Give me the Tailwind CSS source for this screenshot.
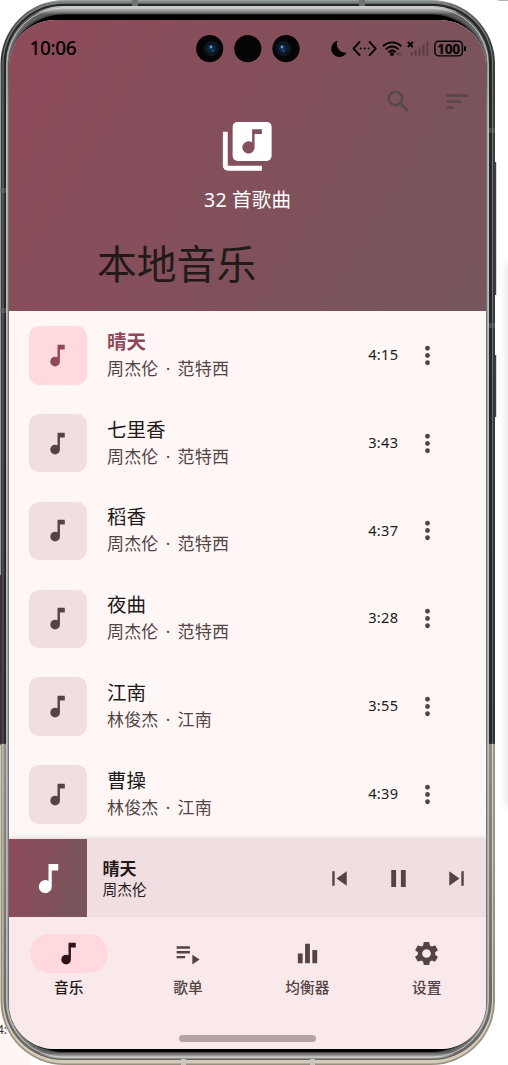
<!DOCTYPE html>
<html lang="zh-CN">
<head>
<meta charset="UTF-8">
<title>本地音乐</title>
<script src="https://cdn.jsdelivr.net/npm/@tailwindcss/browser@4"></script>
</head>
<body class="bg-white">
<svg width="0" height="0" class="absolute">
  <symbol id="note" viewBox="0 0 24 24"><path d="M12 3v10.55A4 4 0 1 0 14 17V7h4V3z"/></symbol>
  <symbol id="more" viewBox="0 0 24 24"><circle cx="12" cy="6" r="2"/><circle cx="12" cy="12" r="2"/><circle cx="12" cy="18" r="2"/></symbol>
</svg>
<div class="relative w-[508px] h-[1065px] overflow-hidden font-['Noto_Sans','Noto_Sans_CJK_SC',sans-serif] text-[#22191a]">
  <!-- Phone body -->
  <svg class="absolute inset-0" width="508" height="1065">
    <defs>
      <linearGradient id="edge" x1="0" y1="0" x2="0" y2="1065" gradientUnits="userSpaceOnUse">
        <stop offset="0" stop-color="#a0a6a0"/><stop offset=".004" stop-color="#6c706d"/><stop offset=".04" stop-color="#3a3c3c"/><stop offset=".698" stop-color="#303235"/><stop offset=".699" stop-color="#9d978a"/><stop offset="1" stop-color="#989080"/>
      </linearGradient>
      <linearGradient id="mid" x1="0" y1="0" x2="0" y2="1065" gradientUnits="userSpaceOnUse">
        <stop offset="0" stop-color="#7c807d"/><stop offset=".698" stop-color="#606366"/><stop offset=".699" stop-color="#d8d2c5"/><stop offset="1" stop-color="#d2cbbb"/>
      </linearGradient>
      <linearGradient id="inner" x1="0" y1="0" x2="0" y2="1065" gradientUnits="userSpaceOnUse">
        <stop offset="0" stop-color="#252728"/><stop offset=".698" stop-color="#252728"/><stop offset=".699" stop-color="#8f8b80"/><stop offset="1" stop-color="#66635b"/>
      </linearGradient>
      <linearGradient id="metal" x1="0" y1="6" x2="0" y2="1060" gradientUnits="userSpaceOnUse">
        <stop offset="0" stop-color="#d0d0d0"/><stop offset=".004" stop-color="#a0a0a0"/><stop offset=".008" stop-color="#5c5c5c"/><stop offset=".05" stop-color="#8c8e8e"/><stop offset=".1" stop-color="#b4b6b6"/><stop offset=".94" stop-color="#b4b6b6"/><stop offset=".985" stop-color="#777"/><stop offset=".993" stop-color="#666"/><stop offset="1" stop-color="#ddd"/>
      </linearGradient>
      <filter id="soft"><feGaussianBlur stdDeviation="1.5"/></filter>
      <filter id="soft2" x="-1" width="3"><feGaussianBlur stdDeviation="4"/></filter>
    </defs>
    <rect x="498" y="0" width="10" height="1" fill="#b5b5b5"/>
    <rect x="506" y="262" width="12" height="544" fill="#e6e6e6" filter="url(#soft2)"/>
    <rect x="0" y="575" width="1" height="170" fill="#5a2a35"/>
    <rect x="0" y="745" width="30" height="320" fill="#fff5f5"/>
    <text x="-3" y="1034" font-size="12" fill="#333">4:</text>
    <path d="M494 162h2.200v133h-2.200zM494 355h2.200v62h-2.200z" fill="#3d3f40"/>
    <rect x=".5" y="0" width="494.500" height="1065" rx="64" fill="url(#edge)"/>
    <rect x="2.500" y="1.500" width="490.500" height="1062" rx="62" fill="url(#mid)"/>
    <rect x="3.500" y="3.800" width="488.500" height="1056.200" rx="60" fill="url(#inner)"/>
    <rect x="6" y="6" width="483" height="1052.500" rx="57" fill="url(#metal)"/>
    <rect x="7" y="8" width="481" height="1049" rx="56" fill="none" stroke="#dcdcdc" stroke-width="1" opacity=".75"/>
    <rect x="9" y="15" width="477" height="1036.500" rx="52" fill="#000" filter="url(#soft)"/>
    <rect x="9" y="14.500" width="477" height="1037.500" rx="55" fill="#000"/>
    <path d="M132 0h6v6h-6zM359 0h6v6h-6z" fill="#6f7370"/>
    <path d="M181 1059h5v6h-5zM310 1059h5v6h-5z" fill="#c9c5ba"/>
    <path d="M0 188h6v5H0zM0 308h6v5H0zM489 128h6v5h-6zM489 323h6v5h-6z" fill="#6d6f70" opacity=".5"/>
  </svg>

  <!-- Screen -->
  <div class="absolute left-[9px] top-[20px] w-[477.3px] h-[1029px] rounded-t-[46px] rounded-b-[46px] overflow-hidden bg-[#fff7f6] flex flex-col">
    <header class="h-[291px] shrink-0 flex flex-col bg-linear-[121deg] from-[#8f4a5a] to-[#75565b]">
      <div class="h-[56px] shrink-0 relative pl-[20.500px] flex items-center">
        <span class="text-[19px] leading-none font-medium text-black font-['Noto_Sans'] tracking-[-0.400px] pt-px">10:06</span>
        <svg class="absolute inset-0" width="477" height="56" viewBox="9 20 477 56" fill="none">
          <g fill="#050507"><circle cx="209.700" cy="48.700" r="13.600"/><circle cx="247.800" cy="48.700" r="13.600"/><circle cx="286" cy="48.700" r="13.600"/></g>
          <g><circle cx="211.500" cy="48.500" r="7.800" fill="#10141c"/><circle cx="211.500" cy="48.500" r="4.200" fill="#0d2748"/><circle cx="211" cy="47" r="1.400" fill="#5a9ae0"/><circle cx="213" cy="50.500" r="1" fill="#2c5f9c"/>
          <circle cx="283.500" cy="48.500" r="7.800" fill="#10141c"/><circle cx="283" cy="48.500" r="4.200" fill="#0d2748"/><circle cx="282" cy="47" r="1.400" fill="#5a9ae0"/><circle cx="283.500" cy="50.500" r="1" fill="#2c5f9c"/></g>
          <path d="M337.500 40.800a8.200 8.200 0 1 0 9.200 11.700a8.500 8.500 0 0 1-9.200-11.700z" fill="#000"/>
          <path d="M359.500 42l-6 6.600 6 6.600M369.700 42l6 6.600-6 6.600" stroke="#000" stroke-width="1.900" stroke-linecap="round" stroke-linejoin="round"/>
          <g fill="#000"><circle cx="360.700" cy="48.600" r="1"/><circle cx="364.700" cy="48.600" r="1"/><circle cx="368.700" cy="48.600" r="1"/></g>
          <path d="M383.500 45.700a12.800 12.800 0 0 1 17.300 0M386.300 48.900a8.500 8.500 0 0 1 11.700 0M389 51.700a5 5 0 0 1 6.200 0" stroke="#000" stroke-width="1.900" stroke-linecap="round"/>
          <circle cx="392" cy="54" r="2" fill="#000"/><ellipse cx="398.800" cy="54" rx="2.500" ry="1.500" fill="#5d3f45"/>
          <path d="M407.800 42l5 5M412.800 42l-5 5" stroke="#000" stroke-width="1.800"/>
          <path d="M411.500 52v3.700M415.500 50v5.700M419.500 47.500v8.200M423.500 44.500v11.200M427.300 41.500v14.200" stroke="#5c3d44" stroke-width="2"/>
          <rect x="434.900" y="41.200" width="27.500" height="14.700" rx="3.800" stroke="#000" stroke-width="1.400"/><path d="M464 46.300h1a1 1 0 0 1 1 1v2.600a1 1 0 0 1-1 1h-1z" fill="#000"/>
          <text x="448.500" y="53.500" font-family="Noto Sans" font-weight="700" font-size="13.800" letter-spacing="-.2" text-anchor="middle" fill="#000">100</text>
        </svg>
      </div>
      <div class="h-[46px] shrink-0 flex justify-end items-center gap-[30px] pr-[14.500px] pt-[4px] text-[#57464a]">
        <svg width="29" height="29" viewBox="0 0 24 24" fill="currentColor"><path d="M15.500 14h-.79l-.28-.27A6.470 6.470 0 0 0 16 9.500 6.500 6.500 0 1 0 9.500 16c1.610 0 3.090-.59 4.230-1.570l.27.28v.79l5 4.990L20.490 19zM9.500 14a4.500 4.500 0 1 1 0-9 4.500 4.500 0 0 1 0 9z"/></svg>
        <svg width="29" height="29" viewBox="0 0 24 24" fill="currentColor"><path d="M3 18h6v-2H3zM3 6v2h18V6zm0 7h12v-2H3z"/></svg>
      </div>
      <div class="flex flex-col items-center">
        <svg class="-mt-[4.800px] h-[58.500px] w-[58.500px]" viewBox="0 0 24 24" fill="#fff"><path d="M20 2H8a2 2 0 0 0-2 2v12a2 2 0 0 0 2 2h12a2 2 0 0 0 2-2V4a2 2 0 0 0-2-2zm-2 5h-3v5.500a2.500 2.500 0 1 1-1-2V5h4zM4 6H2v14a2 2 0 0 0 2 2h14v-2H4z"/></svg>
        <div class="h-[27px] mt-[10.300px] text-[19.500px] leading-[27px] text-white tracking-[0.200px]">32 首歌曲</div>
      </div>
      <div class="mt-[19px] pl-[88px] h-[60px] leading-[60px] text-[39.800px] font-['Noto_Sans_CJK_SC']">本地音乐</div>
    </header>

    <main id="songs" class="h-[528.300px] pt-[0.500px] shrink-0 overflow-hidden"></main>

    <section class="relative h-[78px] shrink-0 flex items-center bg-[#f0dee0] shadow-[0_0_5px_rgba(0,0,0,.2)]">
      <div class="w-[78px] h-[78px] flex items-center justify-center bg-linear-[100deg] from-[#8f4a5a] to-[#75565b]"><svg width="39" height="39" fill="#fff"><use href="#note"/></svg></div>
      <div class="pl-[15.500px] flex-1 font-['Noto_Sans_CJK_SC'] -mt-px">
        <div class="text-[17px] leading-[22px] font-bold">晴天</div>
        <div class="text-[14.700px] leading-[20px]">周杰伦</div>
      </div>
      <div class="flex items-center gap-[29.500px] pr-[15px] text-[#524345]">
        <svg width="29" height="29" viewBox="0 0 24 24" fill="currentColor"><path d="M6 6h2v12H6zm3.500 6l8.500 6V6z"/></svg>
        <svg width="29" height="29" viewBox="0 0 24 24" fill="currentColor"><path d="M6 19h4V5H6zM14 5v14h4V5z"/></svg>
        <svg width="29" height="29" viewBox="0 0 24 24" fill="currentColor"><path d="M6 18l8.500-6L6 6zM16 6v12h2V6z"/></svg>
      </div>
    </section>

    <nav class="relative flex-1 bg-[#fae9ea] grid grid-cols-4 pt-[17.200px] text-[#524345] text-[14.700px] leading-[20px] font-medium font-['Noto_Sans_CJK_SC'] text-center">
      <div class="flex flex-col items-center gap-[4px] text-[#22191a]"><div class="w-[78px] h-[39px] rounded-full bg-[#ffd9de] flex items-center justify-center"><svg width="29" height="29" fill="#2b151a"><use href="#note"/></svg></div>音乐</div>
      <div class="flex flex-col items-center gap-[4px]"><div class="h-[39px] flex items-center"><svg width="29" height="29" viewBox="0 0 24 24" fill="currentColor"><path d="M3 10h11v2H3zM3 6h11v2H3zM3 14h7v2H3zM16 13v8l6-4z"/></svg></div>歌单</div>
      <div class="flex flex-col items-center gap-[4px]"><div class="h-[39px] flex items-center"><svg width="29" height="29" viewBox="0 0 24 24" fill="currentColor"><path d="M10 20h4V4h-4zM4 20h4v-8H4zM16 9v11h4V9z"/></svg></div>均衡器</div>
      <div class="flex flex-col items-center gap-[4px]"><div class="h-[39px] flex items-center"><svg width="29" height="29" viewBox="0 0 24 24" fill="currentColor"><path d="M19.140 12.940c.04-.3.06-.61.06-.94 0-.32-.02-.64-.07-.94l2.030-1.580a.49.49 0 0 0 .12-.61l-1.920-3.320a.488.488 0 0 0-.59-.22l-2.390.96c-.5-.38-1.030-.7-1.620-.94l-.36-2.540a.484.484 0 0 0-.48-.41h-3.840c-.24 0-.43.17-.47.41l-.36 2.540c-.59.24-1.130.57-1.620.94l-2.390-.96a.48.48 0 0 0-.59.22L2.740 8.870a.47.47 0 0 0 .12.61l2.030 1.580c-.05.3-.09.63-.09.94s.02.64.07.94l-2.030 1.580a.49.49 0 0 0-.12.61l1.920 3.320c.12.22.37.29.59.22l2.390-.96c.5.38 1.030.7 1.620.94l.36 2.540c.05.24.24.41.48.41h3.840c.24 0 .44-.17.47-.41l.36-2.540c.59-.24 1.130-.56 1.620-.94l2.390.96c.22.08.47 0 .59-.22l1.920-3.320a.47.47 0 0 0-.12-.61zM12 15.600a3.600 3.600 0 1 1 0-7.200 3.600 3.600 0 0 1 0 7.200z"/></svg></div>设置</div>
      <div class="absolute left-[170px] bottom-[7.500px] w-[137px] h-[6.500px] rounded-full bg-[#b4a4a6]"></div>
    </nav>
  </div>
</div>
<script>
  const songs = [
    ['晴天', '周杰伦 · 范特西', '4:15'],
    ['七里香', '周杰伦 · 范特西', '3:43'],
    ['稻香', '周杰伦 · 范特西', '4:37'],
    ['夜曲', '周杰伦 · 范特西', '3:28'],
    ['江南', '林俊杰 · 江南', '3:55'],
    ['曹操', '林俊杰 · 江南', '4:39'],
  ];
  document.getElementById('songs').innerHTML = songs.map(([title, artist, time], i) => `
    <div class="h-[87.800px] flex items-center pl-[19.500px] pr-[44px]">
      <div class="w-[58.500px] h-[58.500px] rounded-[10px] flex items-center justify-center ${i ? 'bg-[#f0dee0] text-[#524345]' : 'bg-[#ffd9de] text-[#8f4a5a]'}"><svg width="29" height="29" fill="currentColor"><use href="#note"/></svg></div>
      <div class="flex-1 pl-[20px] -mt-px">
        <div class="text-[19.500px] leading-[28px] font-['Noto_Sans_CJK_SC'] ${i ? '' : 'font-bold text-[#8f4a5a]'}">${title}</div>
        <div class="text-[17.050px] leading-[28px] tracking-[0.150px] [word-spacing:2.600px] text-[#524345]">${artist}</div>
      </div>
      <div class="text-[14.600px] font-['Noto_Sans'] tracking-[0.300px] w-[31px] text-right whitespace-nowrap mr-[15px] -mt-px">${time}</div>
      <svg width="29" height="29" fill="#524345"><use href="#more"/></svg>
    </div>`).join('');
</script>
</body>
</html>
